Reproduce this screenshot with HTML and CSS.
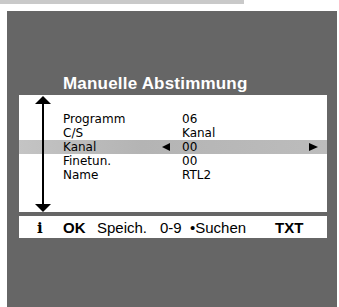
FILE: index.html
```html
<!DOCTYPE html>
<html lang="de">
<head>
<meta charset="utf-8">
<title>Manuelle Abstimmung</title>
<link rel="stylesheet" href="styles.css">
</head>
<body>
<div class="topbar"></div>
<div class="screen">
  <div class="title">Manuelle Abstimmung</div>
  <div class="menu">
    <svg class="vscroll" width="16" height="116" viewBox="0 0 16 116">
      <polygon points="8,0 16,8 0,8" fill="#000"/>
      <rect x="7" y="7" width="2" height="102" fill="#000"/>
      <polygon points="0,108 16,108 8,116" fill="#000"/>
    </svg>
    <div class="row"><span class="lbl">Programm</span><span></span><span class="val">06</span><span></span></div>
    <div class="row"><span class="lbl">C/S</span><span></span><span class="val">Kanal</span><span></span></div>
    <div class="row sel"><span class="lbl">Kanal</span><span class="tri"><svg width="8" height="8" viewBox="0 0 8 8"><polygon points="0,4 8,0 8,8" fill="#000"/></svg></span><span class="val">00</span><span class="tri"><svg width="9" height="8" viewBox="0 0 9 8"><polygon points="0,0 9,4 0,8" fill="#000"/></svg></span></div>
    <div class="row"><span class="lbl">Finetun.</span><span></span><span class="val">00</span><span></span></div>
    <div class="row"><span class="lbl">Name</span><span></span><span class="val">RTL2</span><span></span></div>
  </div>
  <div class="footer">
    <span class="info">i</span>
    <span class="bold">OK</span>
    <span>Speich.</span>
    <span>0-9</span>
    <span>•Suchen</span>
    <span class="bold">TXT</span>
  </div>
</div>
</body>
</html>
```
FILE: styles.css
```css
html, body {
  margin: 0;
  padding: 0;
  background: #ffffff;
}
body {
  width: 339px;
  height: 307px;
  overflow: hidden;
  font-family: "Liberation Sans", Arial, sans-serif;
}
.topbar {
  width: 244px;
  height: 4px;
  background: #c9c9c9;
}
.screen {
  margin: 7px 2px 0 7px;
  height: 296px;
  background: #666666;
  padding-top: 63px;
  box-sizing: border-box;
  display: flex;
  flex-direction: column;
}
.title {
  margin-left: 56px;
  height: 20px;
  line-height: 20px;
  font-size: 17px;
  font-weight: bold;
  letter-spacing: 0.2px;
  color: #ffffff;
}
.menu {
  position: relative;
  margin: 1px 0 0 12px;
  width: 308px;
  height: 117px;
  background: #ffffff;
  padding-top: 17px;
  box-sizing: border-box;
}
.vscroll {
  position: absolute;
  left: 16px;
  top: 1px;
}
.row {
  display: grid;
  grid-template-columns: 99px 20px 127px 10px;
  padding-left: 44px;
  height: 14px;
  line-height: 14px;
  font-family: "DejaVu Sans", sans-serif;
  font-size: 12px;
  color: #000;
}
.row.sel {
  background: linear-gradient(to right, #c4c4c4, #b4b4b4 40%, #bcbcbc);
}
.tri {
  display: flex;
  align-items: center;
}
.footer {
  margin: 4px 0 0 12px;
  width: 308px;
  height: 22px;
  background: #ffffff;
  box-sizing: border-box;
  padding: 2px 0 0 18px;
  display: grid;
  grid-template-columns: 26px 34px 63px 30px 85px auto;
  line-height: 20px;
  font-size: 15px;
  color: #000;
}
.bold {
  font-weight: bold;
}
.info {
  font-family: "DejaVu Serif", serif;
  font-weight: bold;
}
```
